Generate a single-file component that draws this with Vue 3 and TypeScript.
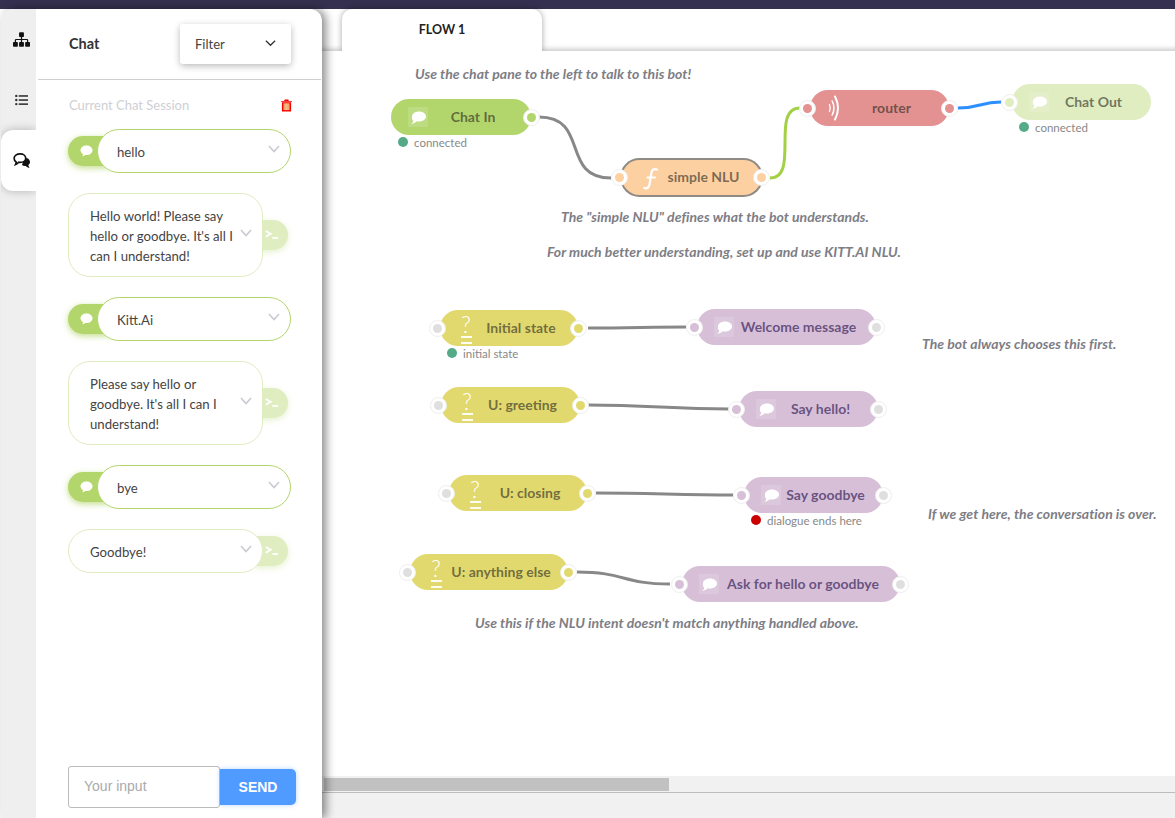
<script setup lang="ts">
import { computed } from 'vue'

type IconName = 'bubble' | 'fn' | 'switch' | 'router'

interface FlowNode {
  label: string
  left: number
  right: number
  top: number
  color: string
  ink: string
  icon: IconName
  inPort?: string
  outPort?: string
  outline?: boolean
  status?: { text: string; color: string }
}

const GREEN = '#b3d66c'
const PALE = '#e0edc0'
const YELLOW = '#e2d96e'
const THISTLE = '#d7bfd7'
const FREE_PORT = '#dfdfdf'
const INK = 'rgba(40, 40, 30, 0.62)'
const PURPLE_INK = 'rgba(60, 40, 95, 0.72)'
const CANVAS_X = 322
const CANVAS_Y = 51

const nodes: FlowNode[] = [
  { label: 'Chat In', left: 391, right: 531, top: 99, color: GREEN, ink: INK, icon: 'bubble', outPort: GREEN, status: { text: 'connected', color: '#55aa88' } },
  { label: 'simple NLU', left: 622, right: 761, top: 160, color: '#fdd0a2', ink: INK, icon: 'fn', inPort: '#fdd0a2', outPort: '#fdd0a2', outline: true },
  { label: 'router', left: 810, right: 949, top: 90, color: '#e49191', ink: INK, icon: 'router', inPort: '#e49191', outPort: '#e49191' },
  { label: 'Chat Out', left: 1012, right: 1151, top: 84, color: PALE, ink: INK, icon: 'bubble', inPort: PALE, status: { text: 'connected', color: '#55aa88' } },
  { label: 'Initial state', left: 440, right: 578, top: 310, color: YELLOW, ink: INK, icon: 'switch', inPort: FREE_PORT, outPort: YELLOW, status: { text: 'initial state', color: '#55aa88' } },
  { label: 'Welcome message', left: 697, right: 876, top: 309, color: THISTLE, ink: PURPLE_INK, icon: 'bubble', inPort: THISTLE, outPort: FREE_PORT },
  { label: 'U: greeting', left: 441, right: 580, top: 387, color: YELLOW, ink: INK, icon: 'switch', inPort: FREE_PORT, outPort: YELLOW },
  { label: 'Say hello!', left: 739, right: 878, top: 391, color: THISTLE, ink: PURPLE_INK, icon: 'bubble', inPort: THISTLE, outPort: FREE_PORT },
  { label: 'U: closing', left: 449, right: 587, top: 475, color: YELLOW, ink: INK, icon: 'switch', inPort: FREE_PORT, outPort: YELLOW },
  { label: 'Say goodbye', left: 744, right: 883, top: 477, color: THISTLE, ink: PURPLE_INK, icon: 'bubble', inPort: THISTLE, outPort: FREE_PORT, status: { text: 'dialogue ends here', color: '#cc0000' } },
  { label: 'U: anything else', left: 410, right: 568, top: 554, color: YELLOW, ink: INK, icon: 'switch', inPort: FREE_PORT, outPort: YELLOW },
  { label: 'Ask for hello or goodbye', left: 682, right: 900, top: 566, color: THISTLE, ink: PURPLE_INK, icon: 'bubble', inPort: THISTLE, outPort: FREE_PORT },
]

const wires = [
  { d: 'M539 117C590 117 560 178 611 178', color: '#888888' },
  { d: 'M770 178C800 178 770 108 800 108', color: '#a3d044' },
  { d: 'M958 108C980 108 980 102 1001 102', color: '#2e90ff' },
  { d: 'M588 328C630 328 650 327 686 327', color: '#888888' },
  { d: 'M588 405C650 405 670 409 729 409', color: '#888888' },
  { d: 'M596 493C650 493 680 495 733 495', color: '#888888' },
  { d: 'M577 572C625 572 622 584 670 584', color: '#888888' },
]

const notes = [
  { text: 'Use the chat pane to the left to talk to this bot!', x: 415, y: 64 },
  { text: 'The "simple NLU" defines what the bot understands.', x: 561, y: 207 },
  { text: 'For much better understanding, set up and use KITT.AI NLU.', x: 547, y: 242 },
  { text: 'The bot always chooses this first.', x: 922, y: 334 },
  { text: 'If we get here, the conversation is over.', x: 928, y: 504 },
  { text: "Use this if the NLU intent doesn't match anything handled above.", x: 475, y: 613 },
]

const messages = [
  { from: 'user', text: 'hello' },
  { from: 'bot', text: "Hello world! Please say hello or goodbye. It's all I can I understand!" },
  { from: 'user', text: 'Kitt.Ai' },
  { from: 'bot', text: "Please say hello or goodbye. It's all I can I understand!" },
  { from: 'user', text: 'bye' },
  { from: 'bot', text: 'Goodbye!' },
]

const placedNodes = computed(() =>
  nodes.map((n) => ({
    ...n,
    box: {
      left: `${n.left - CANVAS_X}px`,
      top: `${n.top - CANVAS_Y}px`,
      width: `${n.right - n.left}px`,
      background: n.color,
      color: n.ink,
    },
  })),
)

const noteStyle = (n: { x: number; y: number }) => ({
  left: `${n.x - CANVAS_X}px`,
  top: `${n.y - CANVAS_Y}px`,
})
</script>

<template>
  <div class="app">
    <div class="topbar"></div>
    <div class="main">
      <aside class="sidebar">
        <nav class="rail">
          <div class="rail-item">
            <svg class="rail-icon" viewBox="0 0 1792 1792"><path fill="#111" d="M1792 1248v320q0 40-28 68t-68 28h-320q-40 0-68-28t-28-68v-320q0-40 28-68t68-28h96v-192h-512v192h96q40 0 68 28t28 68v320q0 40-28 68t-68 28h-320q-40 0-68-28t-28-68v-320q0-40 28-68t68-28h96v-192h-512v192h96q40 0 68 28t28 68v320q0 40-28 68t-68 28h-320q-40 0-68-28t-28-68v-320q0-40 28-68t68-28h96v-192q0-52 38-90t90-38h512v-192h-96q-40 0-68-28t-28-68v-320q0-40 28-68t68-28h320q40 0 68 28t28 68v320q0 40-28 68t-68 28h-96v192h512q52 0 90 38t38 90v192h96q40 0 68 28t28 68z"/></svg>
          </div>
          <div class="rail-item">
            <svg class="rail-icon small" viewBox="0 0 14 12">
              <g fill="#333">
                <circle cx="1.4" cy="1.6" r="1.3"/><circle cx="1.4" cy="6" r="1.3"/><circle cx="1.4" cy="10.4" r="1.3"/>
                <rect x="4" y="0.8" width="10" height="1.7"/><rect x="4" y="5.2" width="10" height="1.7"/><rect x="4" y="9.6" width="10" height="1.7"/>
              </g>
            </svg>
          </div>
          <div class="rail-item active">
            <svg class="rail-icon" viewBox="0 0 18 17">
              <path fill="#111" d="M12 6h3.500C17 7 18 8.500 18 10c0 1.400-.8 2.500-1.800 3.200.2 1.200.7 2.200 1.300 3-1.500-.2-3-.9-4-2-1.500.2-3-.2-4-1z"/>
              <path fill="#fff" stroke="#111" stroke-width="1.800" d="M7.500 1.500c3.500 0 6 2 6 4.500s-2.500 4.500-6 4.500c-.6 0-1.100 0-1.600-.1C5 11.500 3.800 12.300 2.800 12.700c.4-.8.6-1.700.5-2.600C2 9.200 1.200 7.700 1.200 6c0-2.500 2.800-4.500 6.300-4.500z"/>
            </svg>
          </div>
        </nav>

        <section class="panel">
          <header class="panel-head">
            <span class="panel-title">Chat</span>
            <div class="filter">
              <span>Filter</span>
              <svg class="filter-caret" viewBox="0 0 12 8"><path d="M1 1.500l5 5 5-5" fill="none" stroke="#333" stroke-width="1.400"/></svg>
            </div>
          </header>

          <div class="session">
            <span>Current Chat Session</span>
            <svg class="trash" viewBox="0 0 12 13">
              <path fill="#f60000" d="M4 0h4l.6 1.500H12v1H0v-1h3.400zM1 3h10v10H1z"/>
              <rect x="2.600" y="4.200" width="6.800" height="7.300" fill="#f2a25c"/>
              <path stroke="#f7c79b" stroke-width="0.8" d="M4.500 4.200v7.300M6 4.200v7.300M7.500 4.200v7.300"/>
            </svg>
          </div>

          <div class="messages">
            <div v-for="(m, i) in messages" :key="i" class="msg" :class="m.from">
              <div v-if="m.from === 'user'" class="msg-tab">
                <svg class="msg-icon" viewBox="0 0 14 13"><path fill="#fff" d="M7 .5c3.600 0 6.500 2.300 6.500 5.200S10.600 10.900 7 10.900c-.5 0-1 0-1.400-.1-.9.900-2 1.500-3.300 1.700.6-.7 1-1.500 1.100-2.500C1.700 9 .5 7.500.5 5.700.5 2.800 3.400.5 7 .5z"/></svg>
              </div>
              <div class="bubble">
                <span class="bubble-text">{{ m.text }}</span>
                <svg class="bubble-caret" viewBox="0 0 12 8"><path d="M1 1l5 5.500L11 1" fill="none" stroke="#c9c9d2" stroke-width="1.600"/></svg>
              </div>
              <div v-if="m.from === 'bot'" class="msg-tab">
                <svg class="msg-icon term" viewBox="0 0 13 9"><path fill="none" stroke="#fff" stroke-width="1.800" d="M.8 1l5 2.800-5 2.800M7.500 8h5.500"/></svg>
              </div>
            </div>
          </div>

          <form class="composer" @submit.prevent>
            <input class="composer-input" type="text" placeholder="Your input" />
            <button class="composer-send" type="submit">SEND</button>
          </form>
        </section>
      </aside>

      <div class="workspace">
        <div class="tabbar">
          <div class="flow-tab">FLOW 1</div>
        </div>

        <div class="canvas">
          <svg class="wires" viewBox="322 51 853 725" width="853" height="725">
            <path v-for="w in wires" :key="w.d" :d="w.d" :stroke="w.color" fill="none" stroke-width="3"/>
          </svg>

          <div v-for="n in notes" :key="n.text" class="note" :style="noteStyle(n)">{{ n.text }}</div>

          <div v-for="n in placedNodes" :key="n.label" class="node" :class="{ outline: n.outline }" :style="n.box">
            <span v-if="n.inPort" class="port in"><i :style="{ background: n.inPort }"></i></span>
            <span class="node-icon" :class="{ shaded: n.icon === 'bubble' }">
              <svg v-if="n.icon === 'bubble'" viewBox="0 0 20 20"><path fill="#fff" d="M11 4.500c4 0 7 2.200 7 5s-3 5-7 5c-.8 0-1.600-.1-2.300-.2C7.300 15.800 5.500 16.600 3.200 17c1.100-.9 1.900-2 2.100-3.200C4 12.800 3.800 11 4 9.500c0-2.800 3-5 7-5z"/></svg>
              <svg v-else-if="n.icon === 'fn'" viewBox="0 0 20 20"><path fill="none" stroke="#fff" stroke-width="2.200" stroke-linecap="round" d="M18 1.500C15 .5 13 1.500 12.500 4.500L10.500 16.500C10 19.500 8 21 5.500 20M8.500 9.500H16"/></svg>
              <span v-else-if="n.icon === 'switch'" class="glyph-switch">?<i></i></span>
              <svg v-else viewBox="0 0 20 20"><path fill="none" stroke="#fff" stroke-linecap="round" d="M2.500 6.500q1.500 3.500 0 7" stroke-width="1.300"/><path fill="none" stroke="#fff" stroke-linecap="round" d="M5.200 3q3.500 7 0 14" stroke-width="1.600"/><path fill="none" stroke="#fff" stroke-linecap="round" d="M8 -1.500q6 11.500 0 23" stroke-width="2"/></svg>
            </span>
            <span class="node-label">{{ n.label }}</span>
            <span v-if="n.outPort" class="port out"><i :style="{ background: n.outPort }"></i></span>
            <div v-if="n.status" class="status"><b :style="{ background: n.status.color }"></b>{{ n.status.text }}</div>
          </div>
        </div>

        <div class="scrollbar"><div class="scroll-thumb"></div></div>
        <div class="bottom"></div>
      </div>
    </div>
  </div>
</template>

<style>
html,
body {
  margin: 0;
  background: #fff;
  overflow: hidden;
}
</style>

<style scoped>
.app {
  height: 100vh;
  display: flex;
  flex-direction: column;
  overflow: hidden;
  font-family: "Lato", "Noto Sans", sans-serif;
  color: #333;
}

.topbar {
  flex: none;
  height: 9px;
  background: #35304f;
}

.main {
  flex: 1;
  display: flex;
  min-height: 0;
}

.sidebar {
  flex: none;
  width: 321px;
  margin-left: 1px;
  display: flex;
  background: #fff;
  border-radius: 12px 12px 0 0;
  box-shadow: 4px 0 10px rgba(0, 0, 0, 0.45);
  position: relative;
  z-index: 2;
}

.rail {
  flex: none;
  width: 35px;
  background: #efefef;
  border-radius: 12px 0 0 0;
}

.rail-item {
  height: 60.5px;
  display: flex;
  align-items: center;
  justify-content: center;
  padding-left: 5px;
  box-sizing: border-box;
}

.rail-item.active {
  background: #fff;
  border-radius: 12px 0 0 12px;
  box-shadow: 0 0 10px rgba(0, 0, 0, 0.25);
  clip-path: inset(-12px 0 -12px 0);
}

.rail-icon {
  width: 17px;
  height: 17px;
}

.rail-icon.small {
  width: 13px;
  height: 12px;
}

.panel {
  flex: 1;
  min-width: 0;
  display: flex;
  flex-direction: column;
}

.panel-head {
  flex: none;
  height: 70px;
  margin: 0 1px 0 2px;
  padding: 0 30px 0 31px;
  display: flex;
  align-items: center;
  justify-content: space-between;
  border-bottom: 1px solid #cfcfcf;
}

.panel-title {
  font-size: 14.5px;
  font-weight: 700;
  margin-bottom: 2px;
}

.filter {
  width: 111px;
  height: 40px;
  box-sizing: border-box;
  padding: 0 15px;
  display: flex;
  align-items: center;
  justify-content: space-between;
  font-size: 13px;
  color: #444;
  border-radius: 3px;
  background: #fff;
  box-shadow: 0 2px 7px rgba(0, 0, 0, 0.28);
}

.filter-caret {
  width: 11px;
  height: 8px;
  margin-bottom: 3px;
}

.session {
  flex: none;
  height: 20px;
  margin-top: 15px;
  padding: 0 30px 0 33px;
  display: flex;
  align-items: center;
  justify-content: space-between;
  font-size: 13px;
  color: #cfcfd4;
}

.trash {
  width: 11px;
  height: 13px;
}

.messages {
  flex: none;
  margin-top: 14px;
  padding-left: 32px;
  display: flex;
  flex-direction: column;
  gap: 20px;
}

.msg {
  display: flex;
  align-items: center;
}

.msg-tab {
  flex: none;
  height: 30px;
  display: flex;
  align-items: center;
  background: #b3d66c;
  box-shadow: 0 2px 6px rgba(179, 214, 108, 0.8);
}

.msg.user .msg-tab {
  width: 42px;
  padding-left: 12px;
  box-sizing: border-box;
  border-radius: 15px 0 0 15px;
}

.msg.bot .msg-tab {
  width: 33px;
  margin-left: -8px;
  padding-left: 10px;
  box-sizing: border-box;
  background: #e0edc0;
  border-radius: 0 15px 15px 0;
  box-shadow: 0 2px 6px rgba(224, 237, 192, 0.8);
}

.msg-icon {
  width: 13px;
  height: 12px;
}

.msg-icon.term {
  width: 13px;
  height: 9px;
  margin-bottom: 2px;
}

.bubble {
  position: relative;
  z-index: 1;
  display: flex;
  align-items: center;
  box-sizing: border-box;
  min-height: 44px;
  background: #fff;
  border-radius: 22px;
  font-size: 13.2px;
  line-height: 20px;
  color: #444;
}

.msg.user .bubble {
  width: 194px;
  margin-left: -13px;
  padding: 1px 10px 0 19px;
  border: 1px solid #b3d66c;
}

.msg.bot .bubble {
  width: 195px;
  padding: 12px 10px 10px 21px;
  border: 1px solid #e0edc0;
}

.bubble-text {
  flex: 1;
  min-width: 0;
}

.bubble-caret {
  flex: none;
  width: 12px;
  height: 8px;
  margin: 0 0 6px 1px;
}

.composer {
  margin-top: auto;
  padding: 0 0 10px 32px;
  display: flex;
  align-items: center;
}

.composer-input {
  width: 152px;
  height: 42px;
  box-sizing: border-box;
  padding: 0 15px 2px;
  border: 1px solid #bbbbbb;
  border-radius: 3px;
  outline: none;
  font: 14px "Liberation Sans", sans-serif;
  color: #333;
  background: #fff;
}

.composer-input::placeholder {
  color: #aaa;
}

.composer-send {
  width: 76px;
  height: 36px;
  border: 0;
  padding: 0;
  border-radius: 0 5px 5px 0;
  background: #4f9bff;
  color: #fff;
  font: 700 14px "Liberation Sans", sans-serif;
  box-shadow: 0 0 5px rgba(79, 155, 255, 0.4);
}

.workspace {
  flex: 1;
  min-width: 0;
  display: flex;
  flex-direction: column;
}

.tabbar {
  flex: none;
  height: 42px;
  padding-left: 20px;
  background: #fff;
  box-shadow: inset 0 -5px 5px -3px rgba(0, 0, 0, 0.22);
}

.flow-tab {
  width: 200px;
  height: 42px;
  display: flex;
  align-items: center;
  justify-content: center;
  padding-bottom: 1px;
  box-sizing: border-box;
  background: #fff;
  border-radius: 10px 10px 0 0;
  box-shadow: 0 0 6px rgba(0, 0, 0, 0.35);
  clip-path: inset(-8px -8px 0 -8px);
  font-size: 12.5px;
  font-weight: 700;
  color: #222;
}

.canvas {
  flex: 1;
  min-height: 0;
  position: relative;
  overflow: hidden;
  background: #fff;
}

.wires {
  position: absolute;
  left: 0;
  top: 0;
}

.note {
  position: absolute;
  height: 20px;
  line-height: 20px;
  white-space: nowrap;
  font-size: 14px;
  font-style: italic;
  font-weight: 700;
  letter-spacing: 0.03px;
  color: #7d7d85;
}

.node {
  position: absolute;
  height: 36px;
  display: flex;
  align-items: center;
  box-sizing: border-box;
  border-radius: 18px;
  font-size: 14px;
  font-weight: 700;
}

.node.outline {
  box-shadow: 0 0 0 2px #8f8a84;
  height: 35px;
}

.node-icon {
  flex: none;
  width: 20px;
  height: 20px;
  margin-left: 17px;
  display: flex;
  align-items: center;
  justify-content: center;
  color: #fff;
}

.node-icon.shaded {
  background: rgba(255, 255, 255, 0.14);
}

.node-icon svg {
  width: 20px;
  height: 20px;
  overflow: visible;
}

.glyph-switch {
  position: relative;
  top: -4px;
  left: -1px;
  font-size: 23px;
  font-weight: 300;
  line-height: 20px;
}

.glyph-switch i {
  position: absolute;
  left: 0;
  top: 22px;
  width: 11px;
  height: 8px;
  box-sizing: border-box;
  border-top: 2px solid rgba(255, 255, 255, 0.9);
  border-bottom: 2px solid rgba(255, 255, 255, 0.9);
}

.node-label {
  flex: 1;
  min-width: 0;
  margin-right: 13px;
  padding-bottom: 2px;
  text-align: center;
  white-space: nowrap;
}

.port {
  position: absolute;
  top: 50%;
  width: 17px;
  height: 17px;
  margin-top: -8.5px;
  box-sizing: border-box;
  display: flex;
  align-items: center;
  justify-content: center;
  background: #fff;
  border: 1px solid #eeeeee;
  border-radius: 50%;
}

.port.in {
  left: -11px;
}

.port.out {
  right: -9px;
}

.port i {
  width: 9px;
  height: 9px;
  border-radius: 50%;
}

.status {
  position: absolute;
  left: 7px;
  top: 100%;
  height: 14px;
  display: flex;
  align-items: center;
  gap: 6px;
  white-space: nowrap;
  font-size: 11.5px;
  font-weight: 400;
  color: #888;
}

.status b {
  width: 10px;
  height: 10px;
  border-radius: 50%;
}

.scrollbar {
  flex: none;
  height: 17px;
  padding: 2px 0 0 2px;
  box-sizing: border-box;
  background: #f1f1f1;
  border-bottom: 1px solid #bdbdbd;
}

.scroll-thumb {
  width: 345px;
  height: 13px;
  background: #c1c1c1;
}

.bottom {
  flex: none;
  height: 25px;
  background: #f1f1f1;
}
</style>
